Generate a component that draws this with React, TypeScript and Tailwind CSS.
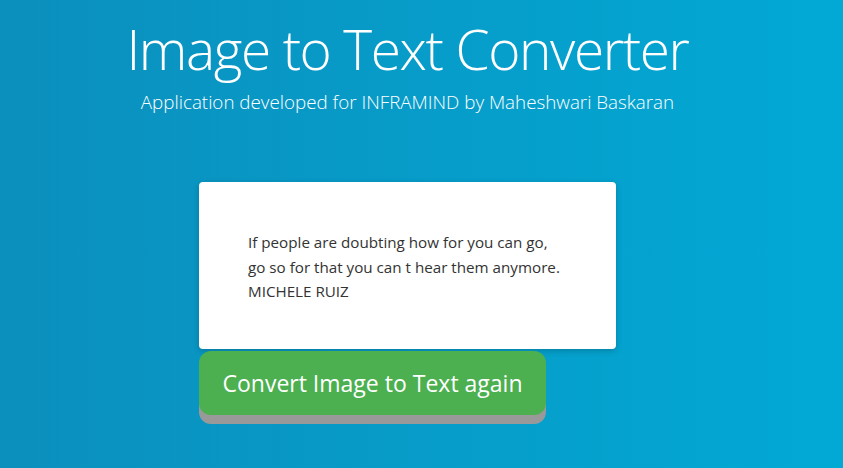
export default function App() {
  return (
    <div
      className="h-[468px] w-full overflow-hidden bg-gradient-to-r from-[#0b8fbd] to-[#02a9d5] text-white"
      style={{ fontFamily: '"Open Sans", "Noto Sans", sans-serif' }}
    >
      <div className="flex w-[815px] flex-col items-center">
        <h1 className="mt-[13px] text-[55px] font-light leading-[72px] tracking-[-1.4px]">
          Image to Text Converter
        </h1>
        <p className="mt-[4px] text-[18.8px] font-light leading-[26px]">
          Application developed for INFRAMIND by Maheshwari Baskaran
        </p>

        <div className="mt-[67px] flex w-[417px] flex-col">
          <div className="h-[167px] whitespace-nowrap rounded-[4px] bg-white px-[49px] pt-[48px] text-[15.2px] leading-[24.5px] text-[#333] shadow-[0_2px_6px_rgba(0,0,0,0.2)]">
            <p>If people are doubting how for you can go,</p>
            <p>go so for that you can t hear them anymore.</p>
            <p>MICHELE RUIZ</p>
          </div>
          <button className="mt-[2px] h-[64px] w-[347px] rounded-[12px] bg-[#4caf50] text-[23px] text-white shadow-[0_9px_0_#999]">
            Convert Image to Text again
          </button>
        </div>
      </div>
    </div>
  );
}
